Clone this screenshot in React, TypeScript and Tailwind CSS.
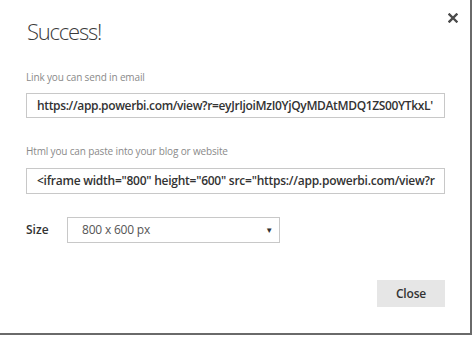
import React from 'react';

const font = { fontFamily: '"Open Sans", "Segoe UI", sans-serif' };

export default function App() {
  return (
    <div className="w-[474px] h-[338px] bg-white" style={font}>
      <div className="relative w-[472px] h-[335px] border-r-2 border-b-2 border-[#6a6a6a] bg-white pl-[26px] pr-[25px] pt-[16px]">
        {/* Close X */}
        <button className="absolute right-[10px] top-[11px] w-[14px] h-[14px] flex items-center justify-center">
          <svg width="10" height="10" viewBox="0 0 10 10">
            <path d="M1.5 1.5 L8.5 8.5 M8.5 1.5 L1.5 8.5" stroke="#4a4a4a" strokeWidth="2.4" strokeLinecap="square" />
          </svg>
        </button>

        <h1 className="pl-[1px] text-[22px] leading-[30px] font-light tracking-[-1.2px] text-[#3a3a3a]">Success!</h1>

        <p className="mt-[24px] text-[10px] leading-[14px] tracking-[-0.15px] text-[#8a8a8a]">Link you can send in email</p>
        <div className="mt-[9px] h-[25px] border border-[#c8c8c8] pl-[10px] overflow-hidden whitespace-nowrap text-[12px] leading-[23px] tracking-[-0.35px] font-semibold text-[#333]">
          https://app.powerbi.com/view?r=eyJrIjoiMzI0YjQyMDAtMDQ1ZS00YTkxL'
        </div>

        <p className="mt-[26px] text-[10px] leading-[14px] tracking-[-0.15px] text-[#8a8a8a]">Html you can paste into your blog or website</p>
        <div className="mt-[10px] h-[26px] border border-[#c8c8c8] pl-[10px] overflow-hidden whitespace-nowrap text-[12px] leading-[24px] tracking-[-0.25px] font-semibold text-[#333]">
          &lt;iframe width="800" height="600" src="https://app.powerbi.com/view?r
        </div>

        <div className="mt-[23px] flex items-center">
          <span className="w-[41px] text-[12px] font-semibold text-[#333]">Size</span>
          <div className="w-[213px] h-[26px] border border-[#c8c8c8] flex items-center justify-between pl-[14px] pr-[6px] text-[12px] tracking-[-0.2px] text-[#555]">
            <span>800 x 600 px</span>
            <span className="text-[8px] text-[#333]">▼</span>
          </div>
        </div>

        <div className="mt-[37px] flex justify-end">
          <button className="w-[68px] h-[27px] bg-[#e6e6e6] text-[12px] font-semibold tracking-[-0.2px] text-[#333]">Close</button>
        </div>
      </div>
    </div>
  );
}
